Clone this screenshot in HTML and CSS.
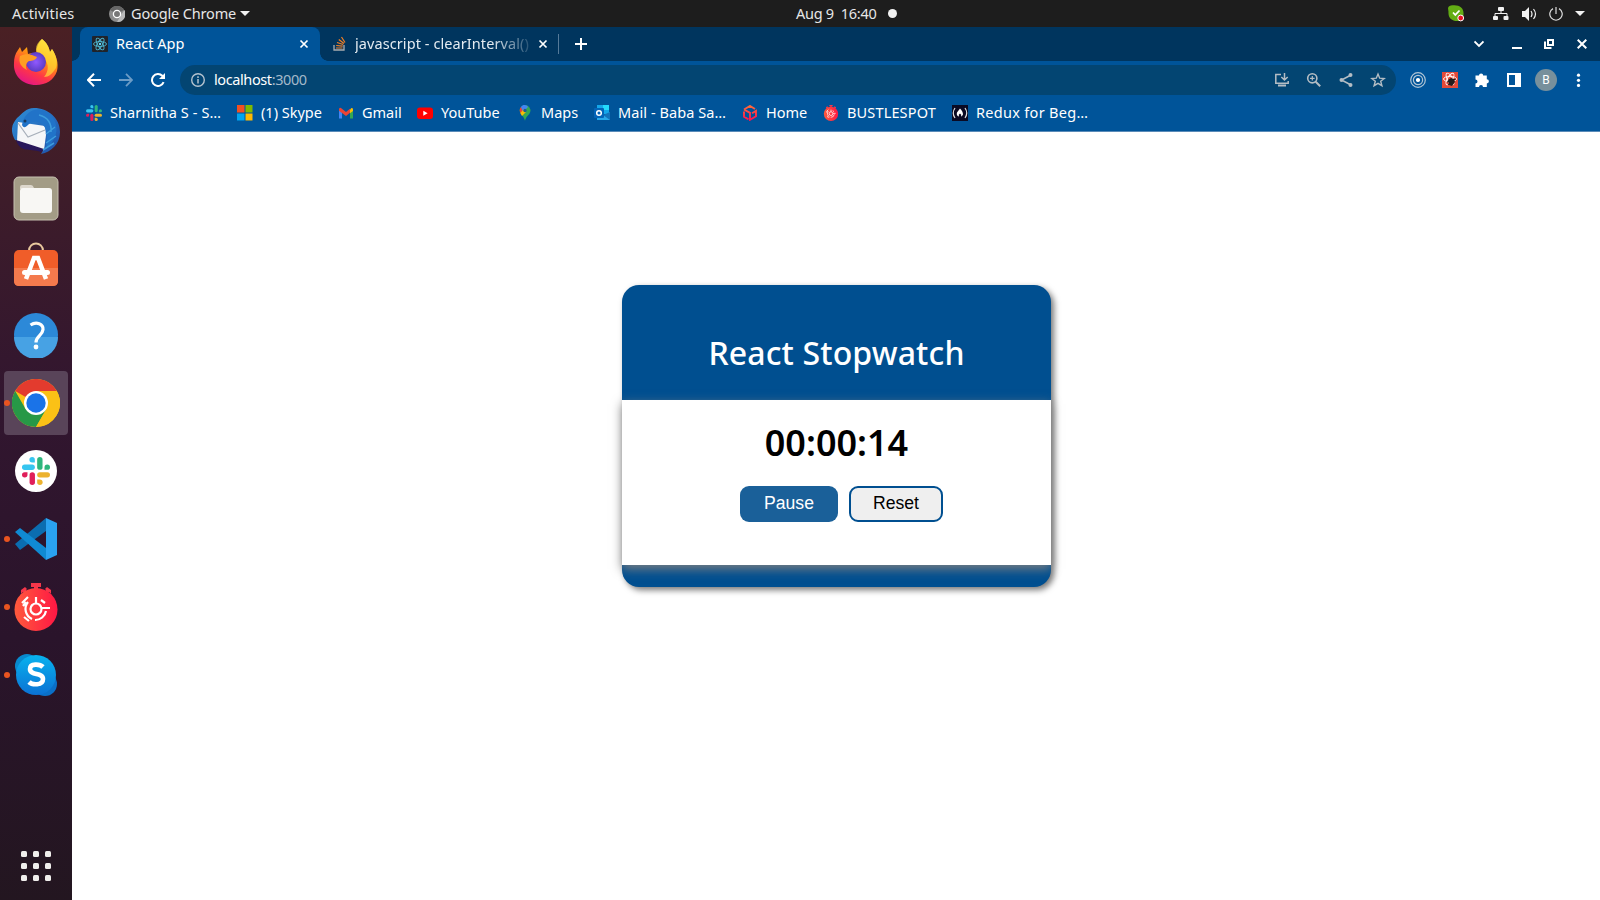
FILE: index.html
```html
<!DOCTYPE html>
<html lang="en">
<head>
<meta charset="utf-8">
<title>React App</title>
<link rel="stylesheet" href="styles.css">
</head>
<body>
<svg class="defs" width="0" height="0">
  <defs>
    <linearGradient id="ff" x1="0.8" y1="0" x2="0.3" y2="1"><stop offset="0" stop-color="#fff44f"/><stop offset=".4" stop-color="#ff980e"/><stop offset=".72" stop-color="#ff3647"/><stop offset="1" stop-color="#e31587"/></linearGradient>
    <radialGradient id="fp"><stop offset="0" stop-color="#9059ff"/><stop offset="1" stop-color="#5b3cc4"/></radialGradient>
    <linearGradient id="tb" x1="0" y1="0" x2="1" y2="1"><stop offset="0" stop-color="#2f8fd8"/><stop offset="1" stop-color="#1f4fa8"/></linearGradient>
    <linearGradient id="bs" x1="0" y1="0" x2="1" y2="0"><stop offset="0" stop-color="#ff5a3c"/><stop offset="1" stop-color="#ff1744"/></linearGradient>
    <linearGradient id="sk" x1="0" y1="0" x2="0" y2="1"><stop offset="0" stop-color="#08b2ee"/><stop offset="1" stop-color="#0b72d4"/></linearGradient>
    <linearGradient id="hm" x1="0" y1="0" x2="0" y2="1"><stop offset="0" stop-color="#ff6a3a"/><stop offset="1" stop-color="#ff1050"/></linearGradient>
    <symbol id="slack" viewBox="0 0 24 24">
      <g fill="#36c5f0"><rect x="0" y="6.500" width="11" height="4.600" rx="2.300"/><path d="M8.700 0a2.300 2.300 0 0 1 2.300 2.300v2.400H8.700a2.300 2.300 0 0 1 0-4.700z"/></g>
      <g fill="#2eb67d"><rect x="13" y="0" width="4.600" height="11" rx="2.300"/><path d="M24 8.700a2.300 2.300 0 0 1-2.300 2.300h-2.400V8.700a2.300 2.300 0 0 1 4.700 0z"/></g>
      <g fill="#ecb22e"><rect x="13" y="13" width="11" height="4.600" rx="2.300"/><path d="M15.300 24a2.300 2.300 0 0 1-2.300-2.300v-2.400h2.300a2.300 2.300 0 0 1 0 4.700z"/></g>
      <g fill="#e01e5a"><rect x="6.500" y="13" width="4.600" height="11" rx="2.300"/><path d="M0 15.300A2.300 2.300 0 0 1 2.300 13h2.400v2.300a2.300 2.300 0 0 1-4.700 0z"/></g>
    </symbol>
    <symbol id="bustle" viewBox="0 0 44 48">
      <g fill="#f5364a"><path d="M17 0h10v4h-3v5h-4V4h-3z"/><path d="m7 7 4-3 2 2-1 1 3 4-3 2-3-4-2 2zM37 7l-4-3-2 2 1 1-3 4 3 2 3-4 2 2z"/></g>
      <circle cx="22" cy="26.500" r="21.500" fill="url(#bs)"/>
      <g fill="none" stroke="#fff" stroke-width="2.200"><circle cx="22" cy="26" r="5.500"/><path d="M22 14v7M27.500 25H36M14 19a11 11 0 0 0 4 17M21 37a11 11 0 0 0 11-9M27 17l4 3M8 20l6-6M9 23l3-4M10 34l5 4"/></g>
    </symbol>
    <symbol id="close" viewBox="0 0 10 10"><path d="m1.500 1.500 7 7m0-7-7 7" fill="none" stroke="#fff" stroke-width="1.700"/></symbol>
  </defs>
</svg>

<header class="topbar">
  <span class="activities">Activities</span>
  <svg class="app-icon" width="16" height="16" viewBox="0 0 16 16"><circle cx="8" cy="8" r="8" fill="#8c8c8c"/><path d="M8 8 1 4a8 8 0 0 1 14 0z" fill="#666"/><path d="M8 16l4-7 3.500-5A8 8 0 0 1 8 16z" fill="#b8b8b8"/><circle cx="8" cy="8" r="3.600" fill="#777" stroke="#fff" stroke-width="1.300"/></svg>
  <span class="app-name">Google Chrome</span>
  <i class="caret"></i>
  <div class="clock"><span>Aug 9&nbsp; 16:40</span><i class="dot"></i></div>
  <div class="tray">
    <svg width="16" height="17" viewBox="0 0 16 17"><path d="M0 3Q1 0 5 .2c7-.5 11 3 10.500 9 .2 4-2 6.500-5 6.800C4 16.500 0 13 .5 7z" fill="#63ad14"/><path d="m5 7.500 2.300 2.400 4.200-4.400" fill="none" stroke="#fff" stroke-width="1.700"/><circle cx="12.700" cy="13" r="2.900" fill="#e81123" stroke="#fff"/></svg>
    <svg class="net" width="16" height="14" viewBox="0 0 16 14" fill="#f2f2f2"><rect x="5" width="6" height="4" rx="1"/><rect y="9" width="5" height="4" rx="1"/><rect x="10.500" y="9" width="5" height="4" rx="1"/><path d="M2 10V6.500h12V10M8 4v3" fill="none" stroke="#f2f2f2"/></svg>
    <svg class="vol" width="15" height="14" viewBox="0 0 15 14"><path d="M0 4h3l4-4v14l-4-4H0z" fill="#f2f2f2"/><path d="M9 4q2 3 0 6M11.500 2q4 5 0 10" fill="none" stroke="#f2f2f2" stroke-width="1.200"/></svg>
    <svg class="pow" width="14" height="14" viewBox="0 0 14 14"><path d="M4 1.600a6.200 6.200 0 1 0 6 0M7 0v7" fill="none" stroke="#ddd" stroke-width="1.200"/></svg>
    <i class="caret"></i>
  </div>
</header>

<div class="desktop">
  <nav class="dock">
    <div class="tile"><svg class="firefox" width="46" height="48" viewBox="0 0 46 48"><path d="M29 1c5 4 7 8 8 13l2-3c4 6 7 14 5 22-3 9-11 14-21 14C9 47 0 37 1 25c0-5 1-9 4-13l2-3 2 5 5-5 1 7c3-1 6-1 8 1 0-7 2-12 6-16z" fill="url(#ff)"/><path d="M29 1c5 4 7 8 8 13l2-3c4 6 6 13 4 19-4 6-7 9-12 9 5-6 5-13 0-19-5-4-8-6-8-9 0-4 2-7 6-10z" fill="#ffe03b" opacity=".65"/><circle cx="23" cy="24" r="10" fill="url(#fp)"/><path d="M7 18c6-3 11-2 17 1-1 3-5 4-8 4-3 2-4 5-2 9-6-3-9-8-7-14z" fill="#ff9d22"/></svg></div>
    <div class="tile"><svg width="48" height="48" viewBox="0 0 48 48"><path d="M5 11C10 7 14 1 22 1c14 0 26 10 26 24 0 12-9 20-19 22 3-4 3-7 1-9L3 33c-6-11-2-17 2-22z" fill="url(#tb)"/><path d="M6 15 33 19l1 9-2 15L5 34z" fill="#f5f6f8"/><path d="M6 16l10 14 17-7" fill="none" stroke="#a7afba" stroke-width="1.200"/><path d="M4 33l28 9-3 3C17 41 8 46 4 33z" fill="#28175b"/><path d="M10 18C12 4 26-2 36 6c13 10 10 26-2 36 1-13 2-18-3-24-5-5-10-4-14-1-3 3-5 5-7 1z" fill="#2173c8"/><path d="M34 27l9-7M34 36l10-7M31 43l11-7M27 8c9 2 13 9 12 17" stroke="#3e9ddd" stroke-width="1.500" fill="none"/><circle cx="13" cy="14" r="1.500" fill="#193b60"/></svg></div>
    <div class="tile"><svg width="46" height="46" viewBox="0 0 46 46"><rect x="1" y="1" width="44" height="43" rx="5" fill="#a39c86" stroke="#c6c0b0"/><path d="M7 11q0-2 2-2h9q2 0 3 3l1 1H7z" fill="#ddd7cc"/><rect x="7" y="12" width="32" height="25" rx="3" fill="#f8f7f4"/></svg></div>
    <div class="tile"><svg class="bag" width="46" height="46" viewBox="0 0 46 46"><path d="M16 9c0-10 14-10 14 0" fill="none" stroke="#e8c89d" stroke-width="2"/><rect x="1" y="8" width="44" height="36" rx="5" fill="#f05d29"/><path d="M1 26h44v13q0 5-5 5H6q-5 0-5-5z" fill="#f47a4d"/><path d="m13 37 8-21h4l8 21" fill="none" stroke="#fff" stroke-width="4.500"/><rect x="9" y="28" width="28" height="5" rx="2.500" fill="#fff"/></svg></div>
    <div class="tile"><svg class="help" width="46" height="46" viewBox="0 0 46 46"><circle cx="23" cy="23" r="22" fill="#2c89d8"/><path d="M1 25a22 22 0 0 0 44 0z" fill="#47a2e4"/><path d="M17.500 13c6-4 13-1 12.500 4.500-.5 6-7 6.500-7 13" fill="none" stroke="#fff" stroke-width="3.200"/><circle cx="23" cy="35" r="2.400" fill="#fff"/></svg></div>
    <div class="tile active running"><svg width="48" height="48" viewBox="0 0 48 48"><circle cx="24" cy="24" r="24" fill="#fbc116"/><path d="M24 24 3.200 12A24 24 0 0 1 44.800 12H24z" fill="#e33b2e"/><path d="M3.200 12A24 24 0 0 0 24 48L34.400 30 24 24 13.600 30z" fill="#279847"/><path d="M24 12h20.800A24 24 0 0 1 24 48l10.400-18z" fill="#fbc116"/><circle cx="24" cy="24" r="12" fill="#fff"/><circle cx="24" cy="24" r="9.700" fill="#1a73e8"/></svg></div>
    <div class="tile"><div class="slack-disc"><svg width="28" height="28"><use href="#slack"/></svg></div></div>
    <div class="tile running"><svg width="42" height="42" viewBox="0 0 42 42"><path d="M0 26 31 0v13L5 32z" fill="#0b6db0"/><path d="M0 14 5 10l26 20v12z" fill="#108ad3"/><path d="M31 0l11 5v32l-11 5z" fill="#2aa2f0"/></svg></div>
    <div class="tile running"><svg width="44" height="48"><use href="#bustle"/></svg></div>
    <div class="tile running"><svg width="44" height="44" viewBox="0 0 44 44"><circle cx="13" cy="13" r="12" fill="#0889cd"/><circle cx="31" cy="31" r="12" fill="#0a70c8"/><circle cx="22" cy="22" r="20" fill="url(#sk)"/><path d="M29 14c-3-3-13-4-13 2 0 7 13 3 13 10 0 7-11 6-14 3" fill="none" stroke="#fff" stroke-width="4.600"/></svg></div>
    <div class="apps"><i></i><i></i><i></i><i></i><i></i><i></i><i></i><i></i><i></i></div>
  </nav>

  <main class="browser">
    <div class="tabs">
      <div class="tab current">
        <svg width="16" height="16" viewBox="0 0 16 16"><rect width="16" height="16" rx="1" fill="#20232a"/><g fill="none" stroke="#4fb7cf" stroke-width=".9"><ellipse cx="8" cy="8" rx="6.500" ry="2.500"/><ellipse cx="8" cy="8" rx="6.500" ry="2.500" transform="rotate(60 8 8)"/><ellipse cx="8" cy="8" rx="6.500" ry="2.500" transform="rotate(120 8 8)"/></g><circle cx="8" cy="8" r="1.200" fill="#61dafb"/></svg>
        <span class="tab-title">React App</span>
        <svg class="x" width="10" height="10"><use href="#close"/></svg>
      </div>
      <div class="tab other">
        <svg width="13" height="16" viewBox="0 0 13 16"><path d="M1 9v5h10V9" fill="none" stroke="#a9adb0" stroke-width="1.300"/><path d="M3 12h6.500M3.200 9.500l6.500.7M4 6.500l6.200 2M5.800 3.500l5.200 4M8.500 1l3.500 5.500" stroke="#f48024" stroke-width="1.200"/></svg>
        <span class="tab-title faded">javascript - clearInterval()</span>
        <svg class="x" width="10" height="10"><use href="#close"/></svg>
      </div>
      <i class="divider"></i>
      <svg class="plus" width="12" height="12" viewBox="0 0 12 12"><path d="M6 0v12M0 6h12" stroke="#fff" stroke-width="2"/></svg>
      <div class="window-controls">
        <svg width="10" height="10" viewBox="0 0 10 10"><path d="m.5 2.500 4.500 4.500 4.500-4.500" fill="none" stroke="#fff" stroke-width="1.800"/></svg>
        <svg class="min" width="10" height="10" viewBox="0 0 10 10"><path d="M0 9h10" stroke="#fff" stroke-width="2"/></svg>
        <svg class="max" width="10" height="10" viewBox="0 0 10 10"><path d="M4 1h5v5H4zM1 2.500V9h6.500" fill="none" stroke="#fff" stroke-width="2"/></svg>
        <svg class="quit" width="10" height="10" viewBox="0 0 10 10"><path d="m.7.700 8.600 8.600m0-8.600L.7 9.300" stroke="#fff" stroke-width="2"/></svg>
      </div>
    </div>

    <div class="toolbar">
      <svg width="14" height="14" viewBox="0 0 14 14"><path d="M14 7H1.500M7 .8.900 7 7 13.200" fill="none" stroke="#fff" stroke-width="2"/></svg>
      <svg class="forward" width="14" height="14" viewBox="0 0 14 14"><path d="M0 7h12.500M7 .8 13.100 7 7 13.200" fill="none" stroke="#6b9cc6" stroke-width="1.800"/></svg>
      <svg class="reload" width="14" height="14" viewBox="0 0 14 14"><path d="M12.600 9.200A6 6 0 1 1 11.300 2.800L12.500 4" fill="none" stroke="#fff" stroke-width="2"/><path d="M14 0v6H8z" fill="#fff"/></svg>
      <div class="address">
        <svg width="14" height="14" viewBox="0 0 14 14"><circle cx="7" cy="7" r="6.300" fill="none" stroke="#b5c3cf" stroke-width="1.400"/><path d="M7 6v4.500M7 3.300v1.600" stroke="#b5c3cf" stroke-width="1.500"/></svg>
        <span class="url">localhost<span>:3000</span></span>
        <div class="address-actions">
          <svg width="16" height="16" viewBox="0 0 16 16" fill="none" stroke="#b4bdc4" stroke-width="1.500"><path d="M7 2.500H1.800v8.700h12.400V9M10.500 1v7M7.300 5l3.200 3 3.200-3"/><path d="M4 13.500h8" stroke-width="2"/></svg>
          <svg width="16" height="16" viewBox="0 0 16 16" fill="none" stroke="#b4bdc4" stroke-width="1.600"><circle cx="6.300" cy="6.300" r="4.600"/><path d="m9.700 9.700 4.500 4.500" stroke-width="2"/><path d="M4 6.300h4.600M6.300 4v4.600" stroke-width="1.200"/></svg>
          <svg width="16" height="16" viewBox="0 0 16 16"><path d="M13 3 3.500 8l9.500 5" fill="none" stroke="#b4bdc4" stroke-width="1.500"/><g fill="#b4bdc4"><circle cx="12.500" cy="3" r="2"/><circle cx="3.500" cy="8" r="2"/><circle cx="12.500" cy="13" r="2"/></g></svg>
          <svg width="16" height="16" viewBox="0 0 16 16"><path d="m8 2 1.700 4.200 4.500.3-3.500 2.800 1.200 4.400L8 11.300l-3.900 2.400 1.200-4.400L1.800 6.500l4.500-.3z" fill="none" stroke="#b4bdc4" stroke-width="1.400"/></svg>
        </div>
      </div>
      <div class="extensions">
        <svg width="16" height="16" viewBox="0 0 16 16" fill="none" stroke="#b0c5d5" stroke-width="1.200"><circle cx="8" cy="8" r="7.300"/><circle cx="8" cy="8" r="4.600"/><circle cx="8" cy="8" r="1.500" fill="#fff" stroke="#fff"/></svg>
        <svg width="16" height="16" viewBox="0 0 16 16"><rect width="16" height="16" fill="#e34a39"/><g fill="none" stroke="#fff" stroke-width=".9"><ellipse cx="8" cy="7" rx="6.500" ry="2.600"/><ellipse cx="8" cy="7" rx="6.500" ry="2.600" transform="rotate(60 8 7)"/><ellipse cx="8" cy="7" rx="6.500" ry="2.600" transform="rotate(120 8 7)"/></g><path d="M6 8l3-2 3 1 1 3-3 4-3-1z" fill="#231c1c"/><path d="m5 10 9-3M6 13l7-6" stroke="#231c1c"/></svg>
        <svg width="16" height="16" viewBox="0 0 16 16"><path d="M1.500 3.500H5a2.100 2.100 0 1 1 4.200 0h3.600v3.700a2.100 2.100 0 1 1 0 4.200V15H9a2 2 0 0 0-4 0H1.500v-3.600a2 2 0 0 0 0-4z" fill="#fff"/></svg>
        <svg width="16" height="16" viewBox="0 0 16 16"><path d="M2 2h12v12H2z" fill="none" stroke="#fff" stroke-width="2"/><path d="M9 2h5v12H9z" fill="#fff"/></svg>
        <span class="avatar">B</span>
        <svg width="16" height="16" viewBox="0 0 16 16" fill="#fff"><circle cx="8.500" cy="3.200" r="1.600"/><circle cx="8.500" cy="8.300" r="1.600"/><circle cx="8.500" cy="13.400" r="1.600"/></svg>
      </div>
    </div>

    <div class="bookmarks">
      <a class="bm b1"><svg width="16" height="16"><use href="#slack"/></svg><span>Sharnitha S - S…</span></a>
      <a class="bm b2"><svg width="16" height="16" viewBox="0 0 16 16"><path d="M0 0h7.500v7.500H0z" fill="#f25022"/><path d="M8.500 0h7v7.500h-7z" fill="#7fba00"/><path d="M0 8.500h7.500v7H0z" fill="#00a4ef"/><path d="M8.500 8.500h7v7h-7z" fill="#ffb900"/></svg><span>(1) Skype</span></a>
      <a class="bm b3"><svg width="16" height="16" viewBox="0 0 16 16"><path d="M1 4v9.500h3V6z" fill="#4285f4"/><path d="M15 4v9.500h-3V6z" fill="#34a853"/><path d="M12 4.500 13.500 3Q15 2.500 15 4.500V6l-3 2.300z" fill="#fbbc04"/><path d="M1 4.500Q1 2 3 3l5 4 4-3.200v4L8 11 1 5.700z" fill="#ea4335"/></svg><span>Gmail</span></a>
      <a class="bm b4"><svg width="16" height="16" viewBox="0 0 16 16"><rect y="2.500" width="16" height="11.500" rx="3" fill="#f00"/><path d="M6.300 5.800v5l4.300-2.500z" fill="#fff"/></svg><span>YouTube</span></a>
      <a class="bm b5"><svg width="16" height="16" viewBox="0 0 16 16"><path d="M8 0a5.500 5.500 0 0 0-5 7c1 3.500 4 4 5 8.800 1-4.800 4-5.300 5.200-8.800A5.500 5.500 0 0 0 8 0z" fill="#34a853"/><path d="M3.300 8C2 5 3 3 4 2l3 3z" fill="#ea4335"/><path d="M4 2c2-3 6-2 7 0L6 7z" fill="#4285f4"/><path d="M3.300 8 7 4l2 3-4 4z" fill="#fbbc04"/><circle cx="8" cy="5.500" r="1.700" fill="#1c5d92"/></svg><span>Maps</span></a>
      <a class="bm b6"><svg width="16" height="16" viewBox="0 0 16 16"><path d="M3 0h12v9H3z" fill="#14a7ea"/><path d="M9 0h6v5H9z" fill="#23d9fb"/><path d="m3 8 6 3 7-4v8H3z" fill="#28a8ea"/><path d="m9 10 7 5V7z" fill="#1273bb"/><rect y="3" width="10" height="10" rx="1" fill="#0364b8"/><circle cx="5" cy="8" r="2.300" fill="none" stroke="#fff" stroke-width="1.500"/></svg><span>Mail - Baba Sa…</span></a>
      <a class="bm b7"><svg width="16" height="16" viewBox="0 0 16 16"><path d="M2 6.500v5.300l4.500 2.600M2 4.500l6 3.300v7l6-3.500V6L10 8.300M13 4 8 1 2 4.500" fill="none" stroke="url(#hm)" stroke-width="1.900"/></svg><span>Home</span></a>
      <a class="bm b8"><svg width="16" height="16"><use href="#bustle"/></svg><span>BUSTLESPOT</span></a>
      <a class="bm b9"><svg width="16" height="16" viewBox="0 0 16 16"><rect width="16" height="16" fill="#0a0a23"/><path d="M3 3Q-.5 8 3 13M13 3q3.500 5 0 10" fill="none" stroke="#ddd" stroke-width="1.200"/><path d="M8 3.500c2 2 3 4 3 6q-1 2-2 2 1-2-1-3-2 1-1 3-3-1-2-4z" fill="#fff"/></svg><span>Redux for Beg…</span></a>
    </div>

    <section class="page">
      <div class="card">
        <h1>React Stopwatch</h1>
        <div class="panel">
          <div class="time">00:00:14</div>
          <div class="buttons"><button class="pause">Pause</button><button class="reset">Reset</button></div>
        </div>
      </div>
    </section>
  </main>
</div>
</body>
</html>
```
FILE: styles.css
```css
* { box-sizing: border-box; }
body { margin: 0; width: 1600px; height: 900px; overflow: hidden; font: 14.5px/20px "Noto Sans", sans-serif; background: #fff; }
svg { display: block; flex: none; }
.defs { position: absolute; }

.topbar { height: 27px; display: flex; align-items: center; background: #1d1d1d; color: #e6e6e6; white-space: nowrap; }
.topbar span { padding-bottom: 2px; }
.activities { width: 97px; margin-right: 12px; padding-left: 12px; letter-spacing: .2px; }
.app-icon { margin-right: 6px; }
.app-name { width: 109px; letter-spacing: -.15px; }
.caret { flex: none; width: 0; height: 0; border: 5px solid transparent; border-top-color: #f2f2f2; border-bottom: 0; }
.clock { display: flex; align-items: center; margin-left: 546px; }
.clock span { width: 92px; letter-spacing: -.28px; }
.dot { flex: none; width: 9px; height: 9px; border-radius: 50%; background: #f2f2f2; }
.tray { display: flex; align-items: center; margin-left: auto; padding-right: 15px; }
.net { margin-left: 29px; }
.vol { margin-left: 13px; }
.pow { margin-left: 12px; margin-right: 12px; }

.desktop { display: flex; height: 873px; }
.dock { flex: none; width: 72px; padding: 4px 4px 19px; display: flex; flex-direction: column; gap: 4px; background: linear-gradient(#4a2024 0, #3d1c2a 20%, #32162f 42%, #2a142b 70%, #231620 100%); }
.tile { position: relative; height: 64px; display: flex; align-items: center; justify-content: center; border-radius: 4px; }
.tile.active { background: #594459; }
.running::before { content: ""; position: absolute; left: 0; top: 29px; width: 6px; height: 6px; border-radius: 50%; background: #e95420; }
.firefox { margin-top: -2px; }
.help { margin-top: -1px; }
.bag { margin-top: -5px; }
.slack-disc { width: 42px; height: 42px; display: grid; place-items: center; border-radius: 50%; background: #fff; }
.apps { margin: auto auto 0; display: grid; grid-template-columns: repeat(3, 6px); gap: 6px; }
.apps i { height: 6px; border-radius: 1.5px; background: #f0eeec; }

.browser { width: 1528px; display: flex; flex-direction: column; color: #fff; }
.tabs { height: 34px; display: flex; align-items: center; padding-left: 8px; background: #00355e; }
.tab { display: flex; align-items: center; white-space: nowrap; height: 34px; }
.tab.current { position: relative; width: 240px; padding: 0 11px 0 12px; border-radius: 8px 8px 0 0; background: #005499; }
.tab.current::before, .tab.current::after { content: ""; position: absolute; bottom: 0; width: 8px; height: 8px; }
.tab.current::before { left: -8px; background: radial-gradient(circle at 0 0, transparent 7.5px, #005499 8px); }
.tab.current::after { right: -8px; background: radial-gradient(circle at 100% 0, transparent 7.5px, #005499 8px); }
.tab .x { margin-left: auto; }
.tab-title { margin-left: 8px; padding-bottom: 2px; }
.tab.other { width: 238px; padding: 0 10px 0 13px; }
.other .tab-title { width: 175px; margin-left: 9px; overflow: hidden; letter-spacing: .08px; color: #e3ebf1; -webkit-mask-image: linear-gradient(90deg, #000 78%, rgba(0, 0, 0, .15)); mask-image: linear-gradient(90deg, #000 78%, rgba(0, 0, 0, .15)); }
.divider { width: 1px; height: 20px; background: #557a99; }
.plus { margin-left: 16px; }
.window-controls { display: flex; margin-left: auto; padding-right: 13px; }
.min { margin-left: 28px; }
.max { margin-left: 22px; }
.quit { margin-left: 23px; }

.toolbar { height: 38px; display: flex; align-items: center; padding-left: 15px; background: #005499; }
.forward { margin-left: 18px; }
.reload { margin-left: 18px; }
.address { width: 1216px; height: 30px; margin-left: 15px; padding: 0 10px 0 11px; display: flex; align-items: center; border-radius: 15px; background: #034572; }
.url { margin-left: 9px; padding-bottom: 2px; letter-spacing: -.4px; color: #fff; }
.url span { color: #a4b9ca; }
.address-actions { margin-left: auto; display: flex; gap: 16px; }
.extensions { display: flex; align-items: center; gap: 16px; margin-left: 14px; }
.avatar { width: 22px; height: 22px; margin: 0 -3px; border-radius: 50%; background: #78909c; text-align: center; font: 12px/22px Roboto, sans-serif; }

.bookmarks { height: 33px; display: flex; padding-left: 14px; background: #005499; border-bottom: 1px solid #5a8bb8; white-space: nowrap; }
.bm { display: flex; align-items: center; gap: 8px; height: 28px; }
.bm span { padding-bottom: 2px; }
.b1 { width: 151px; letter-spacing: .1px; }
.b2 { width: 101px; }
.b3 { width: 79px; }
.b4 { width: 100px; }
.b5 { width: 77px; }
.b6 { width: 148px; letter-spacing: .07px; }
.b7 { width: 81px; }
.b8 { width: 129px; letter-spacing: .15px; }
.b9 { letter-spacing: .3px; }

.page { flex: 1; padding: 153px 0 0 550px; background: #fff; }
.card { width: 429px; height: 302px; border-radius: 17px; background: #004f90; box-shadow: 3px 3px 6px #777; }
h1 { margin: 0; height: 115px; padding-top: 45px; text-align: center; letter-spacing: .15px; font: 600 32px/46px "Noto Sans", sans-serif; font-weight: 550; }
.panel { height: 165px; padding-top: 19px; background: #fff; box-shadow: 0 4px 10px rgba(128, 128, 128, .95); color: #000; }
.time { height: 67px; text-align: center; font: 600 36px/48px "Noto Sans", sans-serif; }
.buttons { display: flex; gap: 11px; padding-left: 118px; }
button { height: 36px; padding: 0 0 2px; border-radius: 9px; font: 17.6px "Liberation Sans", Arial, sans-serif; }
.pause { width: 98px; border: 0; background: #1a6099; color: #fff; }
.reset { width: 94px; border: 2px solid #004f90; background: #efefef; color: #000; }
```
